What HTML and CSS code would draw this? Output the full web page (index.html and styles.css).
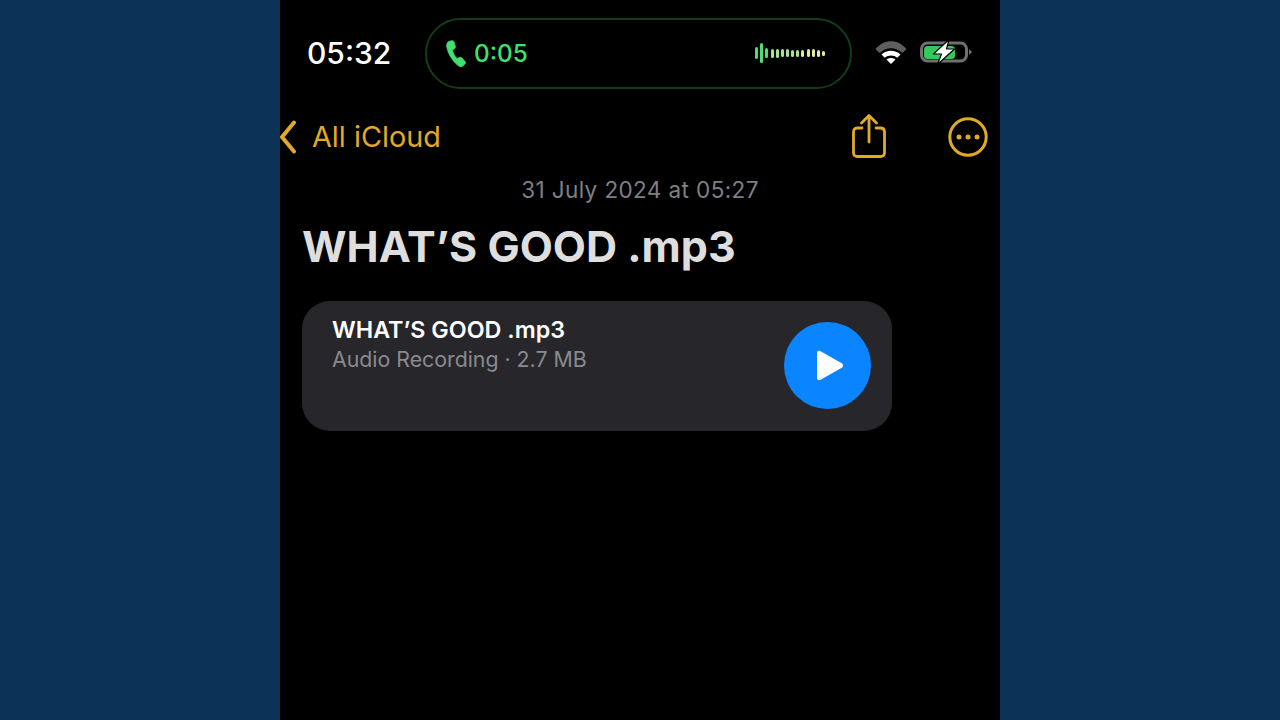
FILE: index.html
```html
<!DOCTYPE html>
<html lang="en">
<head>
    <meta charset="UTF-8">
    <meta name="viewport" content="width=device-width, initial-scale=1.0">
    <title>WHAT'S GOOD .mp3</title>
    <link rel="stylesheet" href="styles.css">
</head>
<body>

    <div class="phone">

        <!-- Status bar -->
        <header class="status-bar">
            <span class="time">05:32</span>
            <div class="island">
                <svg class="call-icon" viewBox="0 0 22 28"><path d="M3.2 1.2 6.4 0.6c.9-.2 1.6.3 1.9 1.1l1.5 5c.2.8 0 1.5-.6 2L7.2 10c-.4.4-.5.9-.3 1.4.8 2.5 2.3 5.3 4 7.3.4.4.9.5 1.4.3l2.2-.9c.8-.3 1.5-.1 2.1.5l3.4 3.9c.6.7.6 1.5 0 2.2l-2.1 2.2c-1 1-2.5 1.3-3.8.6C8.2 24.100 2.400 15.500.8 7.300.4 4.700 1.100 2.200 3.200 1.200Z"/></svg>
                <span class="call-time">0:05</span>
                <div class="wave">
                    <i class="bar-g" style="height:12px"></i>
                    <i class="bar-g" style="height:20px"></i>
                    <i class="bar-g" style="height:10px"></i>
                    <i class="bar-l" style="height:9px"></i>
                    <i class="bar-l" style="height:9px"></i>
                    <i class="bar-l" style="height:8px"></i>
                    <i class="bar-l" style="height:8px"></i>
                    <i class="bar-l" style="height:7px"></i>
                    <i class="bar-l" style="height:7px"></i>
                    <i class="bar-y" style="height:7px"></i>
                    <i class="bar-y" style="height:8px"></i>
                    <i class="bar-y" style="height:8px"></i>
                    <i class="bar-y" style="height:7px"></i>
                    <i class="bar-y" style="height:5px"></i>
                </div>
            </div>
            <svg class="wifi-icon" viewBox="0 0 32 24">
                <path class="wifi-dim" d="M0.500 9C9 -1.500 23 -1.500 31.500 9L27.500 13C20.500 6.500 11.500 6.500 4.500 13Z"/>
                <path d="M6.500 14.500C12 9.500 20 9.500 25.500 14.500L22.300 17.800C18.500 14.800 13.500 14.800 9.700 17.800Z"/>
                <path d="M11.500 19.500C14 17.500 18 17.500 20.500 19.500L16 24Z"/>
            </svg>
            <svg class="battery-icon" viewBox="0 0 54 26">
                <rect x="2.500" y="4" width="45" height="18" rx="6" fill="none" stroke="#707070" stroke-width="3"/>
                <rect x="5" y="7" width="31" height="13" rx="3.500" fill="#35c85a"/>
                <path d="M50 10 53 13 50 16Z" fill="#707070"/>
                <path d="M30 0.500 14.500 15H22.500L18.500 25.500 35.500 10H27.500Z" fill="#fff" stroke="#000" stroke-width="1.200" stroke-linejoin="round"/>
            </svg>
        </header>

        <!-- Nav -->
        <nav class="nav-bar">
            <a class="back-link" href="#">
                <svg class="chevron" viewBox="0 0 17 34"><path d="M14 2.500 2 17 14 31.500"/></svg>
                <span>All iCloud</span>
            </a>
            <svg class="share-icon" viewBox="0 0 36 44">
                <path d="M11 14H6.500C4 14 2.500 15.500 2.500 18V38.500C2.500 41 4 42.500 6.500 42.500H29.500C32 42.500 33.500 41 33.500 38.500V18C33.500 15.500 32 14 29.500 14H25"/>
                <path d="M18 28V2M10.500 9 18 1.500 25.500 9"/>
            </svg>
            <svg class="more-icon" viewBox="0 0 40 40">
                <circle class="ring" cx="20" cy="20" r="18.200"/>
                <circle cx="11" cy="20" r="2.500"/>
                <circle cx="20" cy="20" r="2.500"/>
                <circle cx="29" cy="20" r="2.500"/>
            </svg>
        </nav>

        <!-- Note -->
        <main class="note">
            <p class="note-date">31 July 2024 at 05:27</p>
            <h1 class="note-title">WHAT’S GOOD .mp3</h1>
            <div class="audio-card">
                <div class="audio-info">
                    <div class="audio-name">WHAT’S GOOD .mp3</div>
                    <div class="audio-meta">Audio Recording · 2.7 MB</div>
                </div>
                <div class="play-btn">
                    <svg class="play-icon" viewBox="0 0 28 31"><path d="M1 3.200C1 1.100 3 0.300 4.600 1.200L25.800 13.300C27.600 14.300 27.600 16.700 25.800 17.700L4.600 29.800C3 30.700 1 29.900 1 27.800Z"/></svg>
                </div>
            </div>
        </main>

    </div>

</body>
</html>
```

FILE: styles.css
```css
* {
    box-sizing: border-box;
}

body {
    font-family: Inter, "Liberation Sans", sans-serif;
    background-color: #0c3257;
    margin: 0;
    padding: 0;
    overflow: hidden;
}

.phone {
    width: 720px;
    height: 720px;
    margin: 0 auto;
    background-color: #000;
}

.status-bar {
    display: flex;
    align-items: center;
    height: 89px;
    padding: 18px 27px 0 27px;
}

.time {
    width: 118px;
    margin-bottom: 2px;
    color: #fff;
    font-size: 30px;
    font-weight: 500;
}

.island {
    display: flex;
    align-items: center;
    width: 427px;
    height: 71px;
    padding: 0 25px 1px 19px;
    border: 2px solid #123d1b;
    border-radius: 36px;
}

.call-icon {
    width: 21px;
    height: 27px;
    margin-right: 7px;
    fill: #40e070;
    stroke: #40e070;
    stroke-width: 0.800;
}

.call-time {
    color: #40e070;
    font-size: 24.300px;
    font-weight: 500;
}

.wave {
    display: flex;
    align-items: center;
    gap: 2.150px;
    margin-left: auto;
}

.wave i {
    display: block;
    width: 3px;
    border-radius: 2px;
}

.bar-g {
    background-color: #4fdc72;
}

.bar-l {
    background-color: #a5e68a;
}

.bar-y {
    background-color: #e6ec94;
}

.wifi-icon {
    width: 32px;
    height: 24px;
    margin-left: 23px;
    margin-bottom: 4px;
    fill: #fff;
}

.wifi-dim {
    fill: #5e5e5e;
}

.battery-icon {
    width: 54px;
    height: 26px;
    margin-left: 12px;
    margin-bottom: 3px;
}

.nav-bar {
    display: flex;
    align-items: center;
    height: 48px;
    margin-top: 24px;
    padding-right: 12px;
}

.back-link {
    display: flex;
    align-items: center;
    margin-right: auto;
    margin-top: -1px;
    color: #e0aa25;
    font-size: 28.800px;
    text-decoration: none;
}

.chevron {
    width: 17px;
    height: 34px;
    margin-right: 15px;
    fill: none;
    stroke: #e0aa25;
    stroke-width: 4;
    stroke-linecap: round;
    stroke-linejoin: round;
}

.share-icon {
    width: 36px;
    height: 44px;
    margin-right: 61px;
    margin-top: -3px;
    fill: none;
    stroke: #e0aa25;
    stroke-width: 2.800;
    stroke-linecap: round;
    stroke-linejoin: round;
}

.more-icon {
    width: 40px;
    height: 40px;
    fill: #e0aa25;
}

.ring {
    fill: none;
    stroke: #e0aa25;
    stroke-width: 3;
}

.note {
    padding: 0 22px;
}

.note-date {
    margin: 16px 0 0 0;
    color: #7f7f85;
    font-size: 22.500px;
    letter-spacing: 0.400px;
    line-height: 26px;
    text-align: center;
}

.note-title {
    margin: 16px 0 0 0;
    color: #dedede;
    font-size: 43px;
    font-weight: 700;
    line-height: 54px;
}

.audio-card {
    display: flex;
    align-items: center;
    justify-content: space-between;
    width: 590px;
    height: 130px;
    margin-top: 28px;
    padding: 0 21px 0 30px;
    background-color: #27262b;
    border-radius: 28px;
}

.audio-info {
    align-self: flex-start;
    padding-top: 15px;
}

.audio-name {
    color: #fff;
    font-size: 23.300px;
    font-weight: 600;
    line-height: 28px;
}

.audio-meta {
    margin-top: 2px;
    color: #8a8a8f;
    font-size: 21.300px;
    line-height: 26px;
}

.play-btn {
    display: flex;
    align-items: center;
    justify-content: center;
    width: 87px;
    height: 87px;
    margin-bottom: 1px;
    padding-left: 5px;
    background-color: #0a84ff;
    border-radius: 50%;
}

.play-icon {
    width: 28px;
    height: 31px;
    fill: #fff;
}
```
